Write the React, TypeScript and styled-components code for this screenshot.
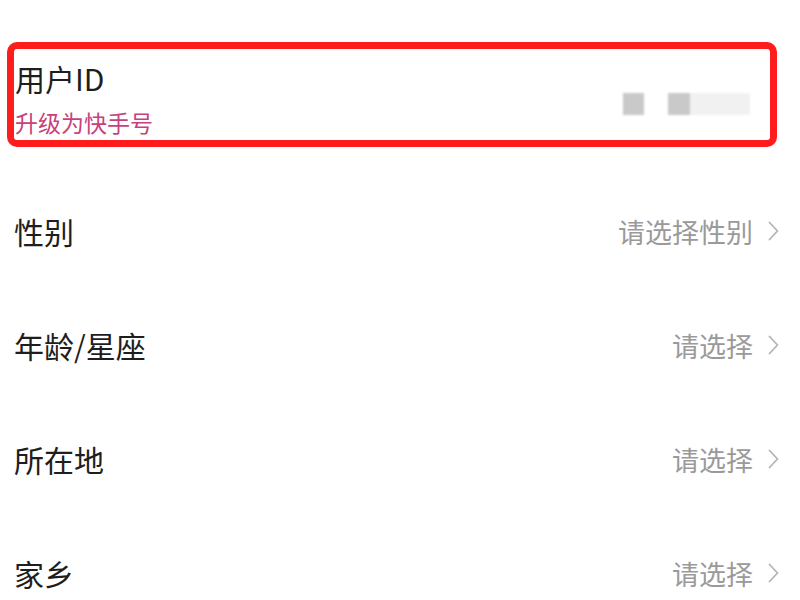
import { ReactElement } from 'react';
import styled, { createGlobalStyle } from 'styled-components';

const GlobalStyle = createGlobalStyle`
  html, body {
    margin: 0;
    padding: 0;
    background: #fff;
  }
  body {
    font-family: "Noto Sans CJK SC", "Noto Sans", sans-serif;
  }
`;

const Page = styled.div`
  width: 800px;
  height: 600px;
  overflow: hidden;
  display: flex;
  flex-direction: column;
  background: #fff;
`;

const IdCard = styled.div`
  box-sizing: border-box;
  flex-shrink: 0;
  margin: 42px 23px 0 7px;
  height: 105px;
  border: 7px solid #ff1c1c;
  border-radius: 10px;
  display: flex;
  align-items: flex-start;
  justify-content: space-between;
  padding: 0 20px 0 1px;
`;

const IdText = styled.div`
  display: flex;
  flex-direction: column;
  padding-top: 11px;
`;

const IdTitle = styled.div`
  font-size: 30px;
  line-height: 36px;
  color: #1e1e1e;
`;

const UpgradeLink = styled.div`
  margin-top: 11px;
  font-size: 23px;
  line-height: 30px;
  color: #c8417c;
`;

const MaskedId = styled.div`
  display: flex;
  align-items: center;
  gap: 24px;
  margin-top: 44px;
  filter: blur(1px);
`;

const BlockGroup = styled.span`
  display: flex;
`;

const Block = styled.span<{ $w: number; $shade: string }>`
  display: block;
  width: ${(p) => p.$w}px;
  height: 22px;
  background: ${(p) => p.$shade};
`;

const List = styled.div`
  display: flex;
  flex-direction: column;
  flex-shrink: 0;
  margin-top: 27px;
`;

const Row = styled.div`
  height: 114px;
  flex-shrink: 0;
  display: flex;
  align-items: center;
  justify-content: space-between;
  padding: 0 20px 0 14px;
`;

const Label = styled.span`
  font-size: 30px;
  color: #1e1e1e;
`;

const Value = styled.span`
  display: flex;
  align-items: center;
  gap: 14px;
  font-size: 27px;
  color: #9a9a9a;
`;

const Chevron = () => (
  <svg width="13" height="20" viewBox="0 0 13 20" fill="none">
    <path d="M2.5 1.5 L10.5 10 L2.5 18.5" stroke="#b4b4b4" strokeWidth="1.8" strokeLinecap="round" strokeLinejoin="round" />
  </svg>
);

const rows = [
  { label: '性别', value: '请选择性别' },
  { label: '年龄/星座', value: '请选择' },
  { label: '所在地', value: '请选择' },
  { label: '家乡', value: '请选择' },
];

export default function App(): ReactElement {
  return (
    <Page>
      <GlobalStyle />
      <IdCard>
        <IdText>
          <IdTitle>用户ID</IdTitle>
          <UpgradeLink>升级为快手号</UpgradeLink>
        </IdText>
        <MaskedId>
          <Block $w={21} $shade="#c9c9c9" />
          <BlockGroup>
            <Block $w={22} $shade="#c9c9c9" />
            <Block $w={60} $shade="#f1f1f1" />
          </BlockGroup>
        </MaskedId>
      </IdCard>
      <List>
        {rows.map((r) => (
          <Row key={r.label}>
            <Label>{r.label}</Label>
            <Value>
              {r.value}
              <Chevron />
            </Value>
          </Row>
        ))}
      </List>
    </Page>
  );
}
